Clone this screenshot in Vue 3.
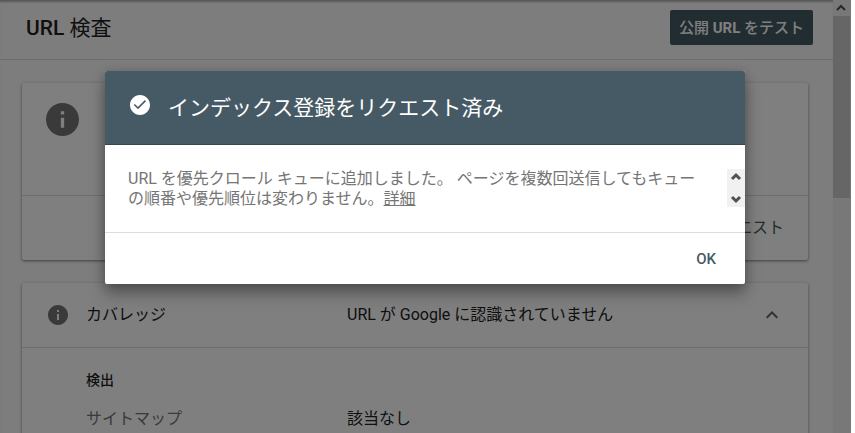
<script setup>
import { ref } from 'vue'

const dialogOpen = ref(true)
const expanded = ref(true)
</script>

<template>
  <div class="shell">
    <div class="page">
      <header class="topbar">
        <h1>URL <span>検査</span></h1>
        <button class="test-btn" type="button">公開 <b>URL</b> をテスト</button>
      </header>

      <main class="cards">
        <section class="card">
          <div class="summary">
            <svg class="info-big" viewBox="2 2 20 20" aria-hidden="true">
              <path d="M12 2C6.48 2 2 6.48 2 12s4.48 10 10 10 10-4.48 10-10S17.52 2 12 2zm1 15h-2v-6h2v6zm0-8h-2V7h2v2z" />
            </svg>
          </div>
          <div class="card-actions">
            <button class="link-btn" type="button">リクエスト</button>
          </div>
        </section>

        <section class="card coverage">
          <div class="coverage-head">
            <svg class="info-small" viewBox="2 2 20 20" aria-hidden="true">
              <path d="M12 2C6.48 2 2 6.48 2 12s4.48 10 10 10 10-4.48 10-10S17.52 2 12 2zm1 15h-2v-6h2v6zm0-8h-2V7h2v2z" />
            </svg>
            <h2>カバレッジ</h2>
            <span class="status">URL が Google に認識されていません</span>
            <button class="toggle" type="button" aria-label="カバレッジ" :aria-expanded="expanded" @click="expanded = !expanded">
              <svg viewBox="0 0 24 24" aria-hidden="true"><path d="M12 8l-6 6 1.41 1.41L12 10.83l4.59 4.58L18 14z" /></svg>
            </button>
          </div>
          <div v-if="expanded" class="coverage-body">
            <h3>検出</h3>
            <dl>
              <dt>サイトマップ</dt>
              <dd>該当なし</dd>
            </dl>
          </div>
        </section>
      </main>
    </div>

    <!-- page scrollbar -->
    <div class="scrollbar" aria-hidden="true">
      <svg class="arrow" viewBox="0 0 16 16"><path d="M4 10l4-4 4 4" /></svg>
      <div class="thumb"></div>
    </div>

    <div v-if="dialogOpen" class="overlay">
      <div class="dialog" role="dialog" aria-modal="true" aria-labelledby="dialog-title">
        <div class="dialog-head">
          <svg viewBox="2 2 20 20" aria-hidden="true">
            <path d="M12 2C6.48 2 2 6.48 2 12s4.48 10 10 10 10-4.48 10-10S17.52 2 12 2zm-2 14.2l-4.2-4.2 1.1-1.1 3.1 3.1 6.9-6.9 1.1 1.1-8 8z" />
          </svg>
          <h2 id="dialog-title">インデックス登録をリクエスト済み</h2>
        </div>
        <div class="dialog-body">
          <p>URL を優先クロール キューに追加しました。 ページを複数回送信してもキューの順番や優先順位は変わりません。<a href="#">詳細</a></p>
          <div class="mini-scroll" aria-hidden="true">
            <svg class="arrow" viewBox="0 0 16 16"><path d="M4 10l4-4 4 4" /></svg>
            <svg class="arrow" viewBox="0 0 16 16"><path d="M4 6l4 4 4-4" /></svg>
          </div>
        </div>
        <div class="dialog-foot">
          <button type="button" @click="dialogOpen = false">OK</button>
        </div>
      </div>
    </div>
  </div>
</template>

<style>
body{margin:0;background:#fff}
</style>

<style scoped>
/* Base */
*{box-sizing:border-box}
h1,h2,h3,p,dl,dd{margin:0}
button{font:inherit;border:0;cursor:pointer}
.shell{position:relative;display:flex;height:100vh;overflow:hidden;margin-right:4px;background:#fafafa;
       color:#212121;font-family:Roboto,"Noto Sans CJK JP",sans-serif;font-size:16px;line-height:20px}
.page{flex:1;min-width:0;box-shadow:inset 0 3px 2px -1px rgba(0,0,0,.3)}

/* Header */
.topbar{display:flex;align-items:center;justify-content:space-between;height:60px;padding:0 20px 4px 26px;
        border-bottom:1px solid #d8d8d8}
h1{font-size:21px;font-weight:500;line-height:28px}
h1 span{font-weight:400}
.test-btn{height:35px;padding:0 9px;border-radius:2px;background:#455a64;color:#fff;font-weight:500;font-size:15px}
.test-btn b{font-weight:700}

/* Cards */
.cards{padding:23px 25px 0 22px}
.card{margin-bottom:23px;border-radius:2px;background:#fff;box-shadow:0 1px 3px rgba(0,0,0,.5)}
.summary{height:113px;padding:20px 24px;border-bottom:1px solid #ddd}
.info-big{display:block;width:33px;height:33px;fill:#757575}
.card-actions{display:flex;justify-content:flex-end;align-items:center;height:64px;padding:0 24px}
.link-btn{padding:0;background:none;color:#455a64}
.coverage-head{display:flex;align-items:center;height:65px;padding:0 24px 0 26px;border-bottom:1px solid #ddd}
.info-small{width:20px;height:20px;margin-right:18px;fill:#757575}
.coverage-head h2{width:261px;font-size:16px;font-weight:400}
.status{flex:1}
.toggle{width:24px;height:24px;padding:0;background:none}
.toggle svg{display:block;fill:#616161}
.coverage-body{height:200px;padding:22px 24px 0 64px}
h3{font-size:14px;font-weight:500}
dl{display:flex;margin-top:19px}
dt{width:261px;color:#757575}

/* Scrollbars */
.scrollbar{width:18px;background:#f1f1f1}
.thumb{height:182px;margin-right:1px;background:#cdcdcd}
.arrow{display:block;width:16px;height:16px;fill:none;stroke:#505050;stroke-width:2}

/* Dialog */
.overlay{position:absolute;inset:0;display:flex;align-items:flex-start;justify-content:center;
         padding:71px 106px 0 105px;background:rgba(0,0,0,.5)}
.dialog{flex:1;border-radius:2px;overflow:hidden;background:#fff;color:#757575;
        box-shadow:0 10px 16px rgba(0,0,0,.3),0 2px 12px rgba(0,0,0,.2)}
.dialog-head{display:flex;align-items:center;height:74px;padding:0 25px;background:#455a64;color:#fff;
             border-bottom:1px solid #37474f}
.dialog-head svg{width:20px;height:20px;margin:0 18px 6px 0;fill:#fff}
.dialog-head h2{font-size:21px;font-weight:400;line-height:28px}
.dialog-body{display:flex;padding:24px 0 23px 23px;border-bottom:1px solid #ddd}
.dialog-body p{flex:1;padding-right:26px}
.dialog-body a{color:inherit}
.mini-scroll{display:flex;flex-direction:column;justify-content:space-between;align-items:center;width:18px;height:38px;
             background:#f1f1f1}
.mini-scroll .arrow{stroke-width:3}
.dialog-foot{display:flex;justify-content:flex-end;padding:8px}
.dialog-foot button{height:35px;padding:0 21px;background:none;color:#455a64;font-size:15px;font-weight:500}
</style>
